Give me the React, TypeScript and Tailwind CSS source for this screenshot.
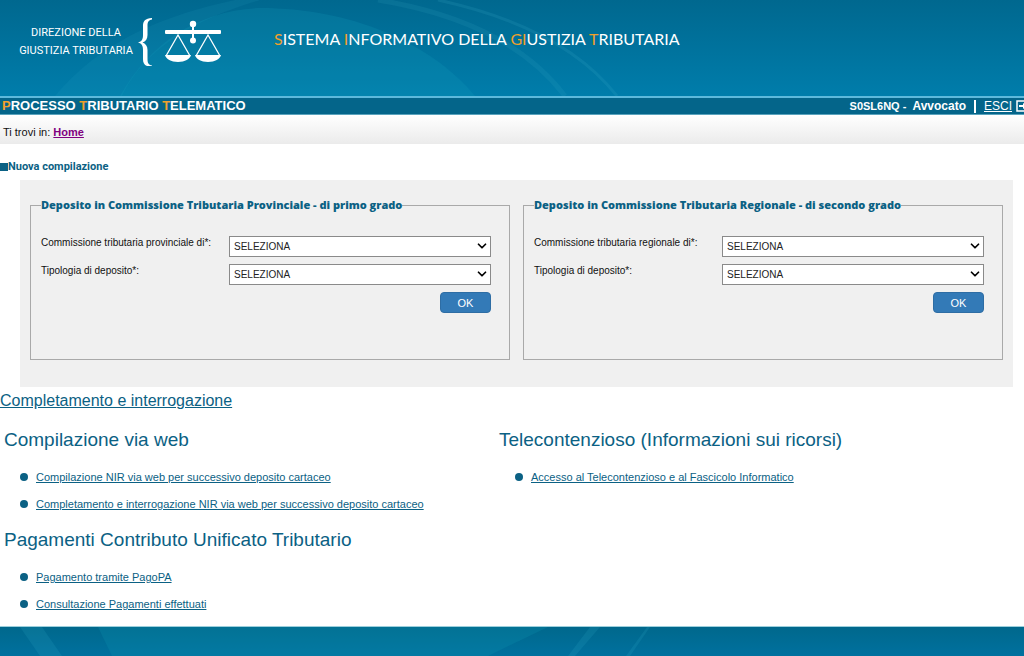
import { ChevronDown } from "lucide-react";

interface DepositFormProps {
    id: string;
    title: string;
    commissionLabel: string;
}

interface LinkSectionProps {
    title: string;
    links: string[];
}

function ScalesLogo() {
    return (
        <svg className="h-12 w-[84px] shrink-0" viewBox="0 0 84 48" fill="none" aria-hidden="true">
            {/* brace */}
            <path
                d="M14 0C7 .5 5 3 5 8v9c0 4-1 6.500-5 7.500C4 25.500 5 28 5 32v9c0 5 2 7.500 9 8v-1.500C10.500 47 9.500 45 9.500 41v-9c0-4-2-6.500-5-7.500 3-1 5-3.500 5-7.500V8c0-4 1-6 4.500-6.500z"
                fill="white"
            />
            {/* beam and pivot */}
            <rect x="27" y="12" width="56" height="4" rx="1" fill="white" />
            <path d="M55 6v17" stroke="white" strokeWidth="2" />
            <circle cx="55" cy="6" r="3.200" fill="white" />
            <circle cx="55" cy="22.500" r="3" fill="white" />
            {/* plates */}
            <path d="M28 38L40 17l12 21M58 38l12-21 12 21" stroke="white" strokeWidth="1.300" />
            <path d="M27 37h26c-1 4-6 7-13 7s-12-3-13-7zM57 37h26c-1 4-6 7-13 7s-12-3-13-7z" fill="white" />
        </svg>
    );
}

function HeaderWaves() {
    return (
        <svg className="absolute inset-0 h-full w-full" viewBox="0 0 1024 96" preserveAspectRatio="none" fill="none" aria-hidden="true">
            <path d="M120 96C150 42 200 10 260 8C350 8 430 42 475 96Z" fill="#12a0bd" opacity=".2" />
            <path d="M55 96C90 55 140 20 235 0h25C175 25 140 60 122 96Z" fill="#35b5cf" opacity=".1" />
            <path d="M378 0C470 15 530 50 565 96" stroke="#45b3cf" strokeWidth="5" opacity=".12" />
            <path d="M438 0C530 20 585 55 617 96" stroke="#45b3cf" strokeWidth="3" opacity=".15" />
        </svg>
    );
}

function Accent({ children }: { children: string }) {
    return <span className="text-[#f0a02c]">{children}</span>;
}

function DepositSelect({ id, label }: { id: string; label: string }) {
    return (
        <div className="flex items-start">
            <label htmlFor={id} className="w-[188px] shrink-0 text-[10px] leading-[14px] whitespace-nowrap">
                {label}
            </label>
            <div className="relative flex-1">
                <select
                    id={id}
                    className="block h-[21px] w-full appearance-none border border-[#8a8a8a] bg-white px-1 text-[10px] leading-4 text-[#222]"
                >
                    <option>SELEZIONA</option>
                </select>
                <ChevronDown className="pointer-events-none absolute top-[3px] right-0.5 size-3.5 text-black" strokeWidth={3} />
            </div>
        </div>
    );
}

function DepositForm({ id, title, commissionLabel }: DepositFormProps) {
    return (
        <fieldset className="h-[163px] min-w-0 flex-1 border border-[#a9a9a9] pr-[18px] pl-[10px]">
            <legend className="font-['Open_Sans',sans-serif] text-[11px] leading-4 font-extrabold whitespace-nowrap text-[#0b6184]">
                {title}
            </legend>
            <div className="flex flex-col gap-[7px] pt-[23px]">
                <DepositSelect id={`${id}-commissione`} label={commissionLabel} />
                <DepositSelect id={`${id}-tipologia`} label="Tipologia di deposito*:" />
                <button
                    type="button"
                    className="h-[21px] w-[51px] self-end rounded border border-[#2e6da4] bg-[#337ab7] text-[11px] leading-4 text-white"
                >
                    OK
                </button>
            </div>
        </fieldset>
    );
}

function LinkSection({ title, links }: LinkSectionProps) {
    return (
        <section className="px-1">
            <h2 className="text-[19px] leading-6">{title}</h2>
            <ul className="mt-[17px] flex flex-col gap-[11px] pl-4">
                {links.map((link) => (
                    <li key={link} className="flex items-center gap-2">
                        <span className="size-2 shrink-0 rounded-full bg-[#0b6184]" />
                        <a href="#" className="text-[11px] leading-4 underline">
                            {link}
                        </a>
                    </li>
                ))}
            </ul>
        </section>
    );
}

export default function App() {
    return (
        <div className="flex min-h-screen flex-col overflow-x-hidden bg-white font-['Liberation_Sans',Arial,sans-serif] text-[#111]">
            <header>
                <div className="relative h-24 bg-linear-to-b from-[#00688f] to-[#007dab] text-white">
                    <HeaderWaves />
                    <div className="relative flex items-start pt-[18px] pl-[19px]">
                        <p className="w-[114px] shrink-0 pt-1.5 text-center font-[Roboto,sans-serif] text-[11px] leading-[18px] whitespace-nowrap">
                            DIREZIONE DELLA
                            <br />
                            GIUSTIZIA TRIBUTARIA
                        </p>
                        <div className="pl-[5px]">
                            <ScalesLogo />
                        </div>
                        <h1 className="pt-[9px] pl-[52px] font-[Lato,sans-serif] text-[16px] leading-6 whitespace-nowrap">
                            <Accent>S</Accent>ISTEMA <Accent>I</Accent>NFORMATIVO DELLA <Accent>GI</Accent>USTIZIA <Accent>T</Accent>RIBUTARIA
                        </h1>
                    </div>
                </div>
                <div className="flex h-[19px] items-center justify-between overflow-hidden border-t-2 border-b border-t-[#5db9dc] border-b-[#5aa3bd] bg-[#04658a] whitespace-nowrap text-white">
                    <p className="pl-0.5 text-[13px] leading-4 font-bold">
                        <Accent>P</Accent>ROCESSO <Accent>T</Accent>RIBUTARIO <Accent>T</Accent>ELEMATICO
                    </p>
                    <div className="-mr-1 flex items-center text-[12px] leading-4">
                        <span className="text-[11px] font-bold">S0SL6NQ -</span>
                        <span className="pl-1.5 text-[12px] font-bold">Avvocato</span>
                        <span className="mx-2 h-[13px] w-0.5 bg-white" />
                        <a href="#" className="flex items-center gap-1">
                            <span className="underline">ESCI</span>
                            <svg className="size-3" viewBox="0 0 12 12" fill="none" stroke="white" aria-hidden="true">
                                <path d="M10 4V1H1v10h9V8" strokeWidth="1.500" />
                                <path d="M3 6h6" strokeWidth="2" />
                                <path d="M7 3l4 3-4 3z" fill="white" stroke="none" />
                            </svg>
                        </a>
                    </div>
                </div>
            </header>

            <nav className="h-[29px] bg-linear-to-b from-white to-[#ebebeb] px-[3px] pt-[9px] text-[11px] leading-4">
                Ti trovi in:{" "}
                <a href="#" className="font-bold text-[#800080] underline">
                    Home
                </a>
            </nav>

            <main className="text-[#0b6184]">
                <h2 className="flex items-center pt-[15px] font-[Roboto,sans-serif] text-[11px] leading-4 font-bold">
                    <span className="size-2 bg-[#0b6184]" />
                    Nuova compilazione
                </h2>
                <div className="mt-[5px] mr-[11px] ml-5 flex gap-[13px] bg-[#f0f0f0] px-[10px] pt-[17px] pb-[27px] text-[#111]">
                    <DepositForm
                        id="provinciale"
                        title="Deposito in Commissione Tributaria Provinciale - di primo grado"
                        commissionLabel="Commissione tributaria provinciale di*:"
                    />
                    <DepositForm
                        id="regionale"
                        title="Deposito in Commissione Tributaria Regionale - di secondo grado"
                        commissionLabel="Commissione tributaria regionale di*:"
                    />
                </div>

                <a href="#" className="mt-1 inline-block text-[16px] leading-5 underline">
                    Completamento e interrogazione
                </a>
                <div className="grid grid-cols-[495px_1fr] gap-y-4 pt-[15px] pb-3.5">
                    <LinkSection
                        title="Compilazione via web"
                        links={[
                            "Compilazione NIR via web per successivo deposito cartaceo",
                            "Completamento e interrogazione NIR via web per successivo deposito cartaceo",
                        ]}
                    />
                    <LinkSection
                        title="Telecontenzioso (Informazioni sui ricorsi)"
                        links={["Accesso al Telecontenzioso e al Fascicolo Informatico"]}
                    />
                    <LinkSection
                        title="Pagamenti Contributo Unificato Tributario"
                        links={["Pagamento tramite PagoPA", "Consultazione Pagamenti effettuati"]}
                    />
                </div>
            </main>

            <footer className="relative min-h-[30px] flex-1 border-t border-[#9ccfdc] bg-linear-to-b from-[#00688c] to-[#00719f]">
                <svg className="absolute inset-0 h-full w-full" viewBox="0 0 1024 30" preserveAspectRatio="none" aria-hidden="true">
                    <path d="M98 0h450L488 30H112Z" fill="#0a93ae" opacity=".25" />
                    <path d="M20 0h22L62 30H40ZM590 0h10L575 30H568ZM647 0h3L630 30H626Z" fill="#35b5cf" opacity=".15" />
                </svg>
            </footer>
        </div>
    );
}
